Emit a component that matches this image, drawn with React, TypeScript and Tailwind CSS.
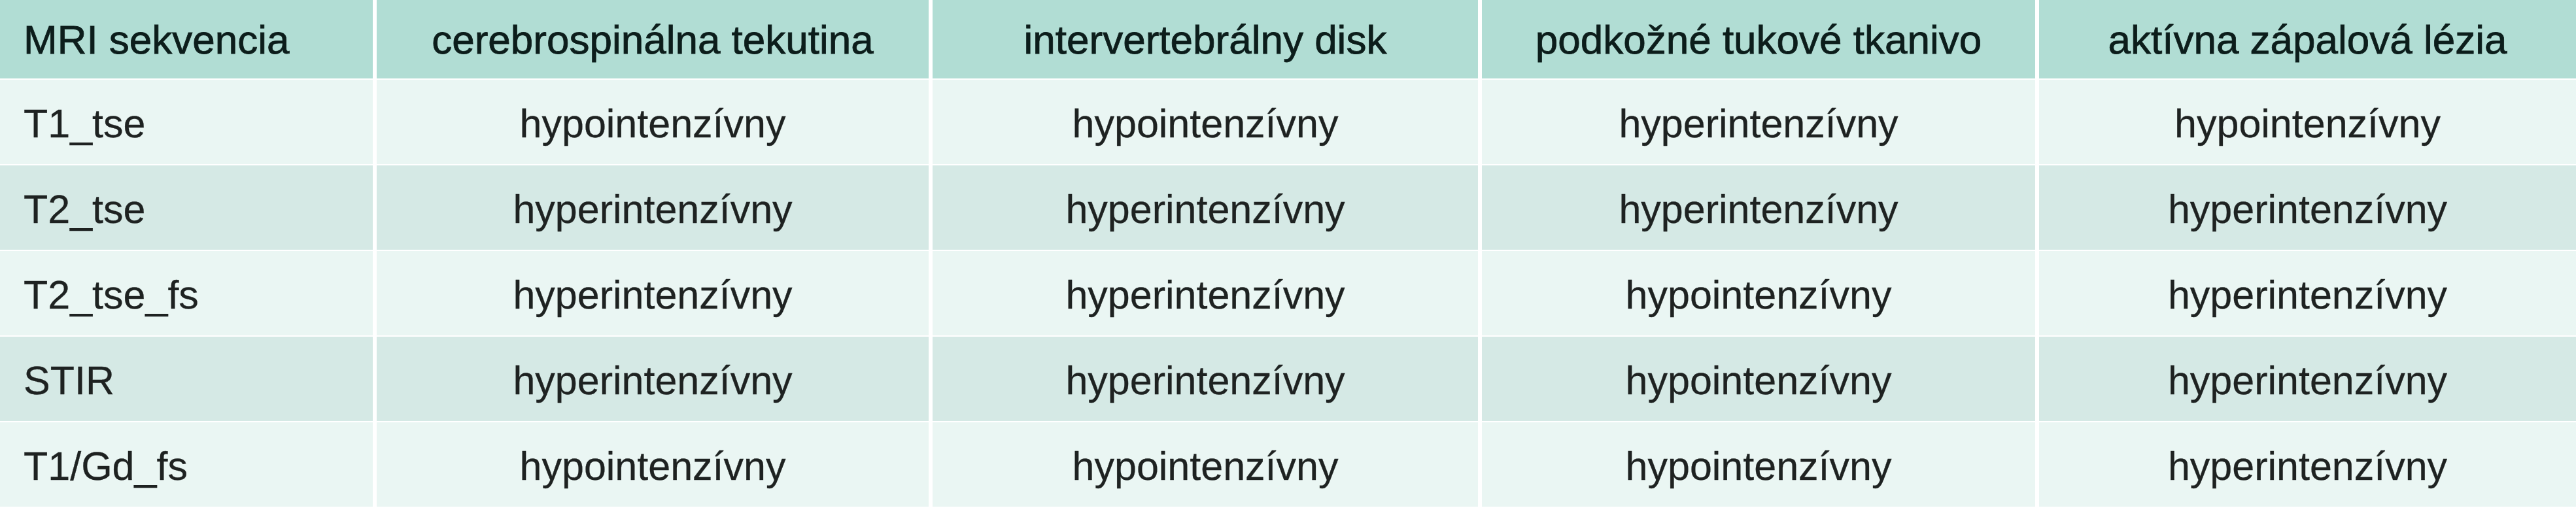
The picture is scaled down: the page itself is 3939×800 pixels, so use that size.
const headers = [
  'MRI sekvencia',
  'cerebrospinálna tekutina',
  'intervertebrálny disk',
  'podkožné tukové tkanivo',
  'aktívna zápalová lézia',
];

const rows: string[][] = [
  ['T1_tse', 'hypointenzívny', 'hypointenzívny', 'hyperintenzívny', 'hypointenzívny'],
  ['T2_tse', 'hyperintenzívny', 'hyperintenzívny', 'hyperintenzívny', 'hyperintenzívny'],
  ['T2_tse_fs', 'hyperintenzívny', 'hyperintenzívny', 'hypointenzívny', 'hyperintenzívny'],
  ['STIR', 'hyperintenzívny', 'hyperintenzívny', 'hypointenzívny', 'hyperintenzívny'],
  ['T1/Gd_fs', 'hypointenzívny', 'hypointenzívny', 'hypointenzívny', 'hyperintenzívny'],
];

const cols = 'grid grid-cols-[570px_844px_834px_846px_1fr] gap-x-[6px]';

export default function App() {
  return (
    <div className="h-[800px] w-[3939px] bg-white font-['Liberation_Sans',Arial,sans-serif]">
      <div className="flex flex-col gap-y-[2px] bg-white">
        <div className={`${cols} h-[120px]`}>
          {headers.map((h, i) => (
            <div
              key={h}
              className={`flex items-center bg-[#b1ddd4] text-[62px] text-[#0c1d1b] [-webkit-text-stroke:0.8px_#0c1d1b] ${
                i === 0 ? 'justify-start pl-[36px]' : 'justify-center'
              }`}
            >
              {h}
            </div>
          ))}
        </div>
        {rows.map((r, ri) => (
          <div key={r[0]} className={`${cols} h-[129px]`}>
            {r.map((c, ci) => (
              <div
                key={ci}
                className={`flex items-center pt-[7px] text-[61px] text-[#1e2221] [-webkit-text-stroke:0.3px_#1e2221] ${
                  ri % 2 === 0 ? 'bg-[#eaf6f3]' : 'bg-[#d5e9e5]'
                } ${ci === 0 ? 'justify-start pl-[36px]' : 'justify-center'}`}
              >
                {c}
              </div>
            ))}
          </div>
        ))}
      </div>
    </div>
  );
}
